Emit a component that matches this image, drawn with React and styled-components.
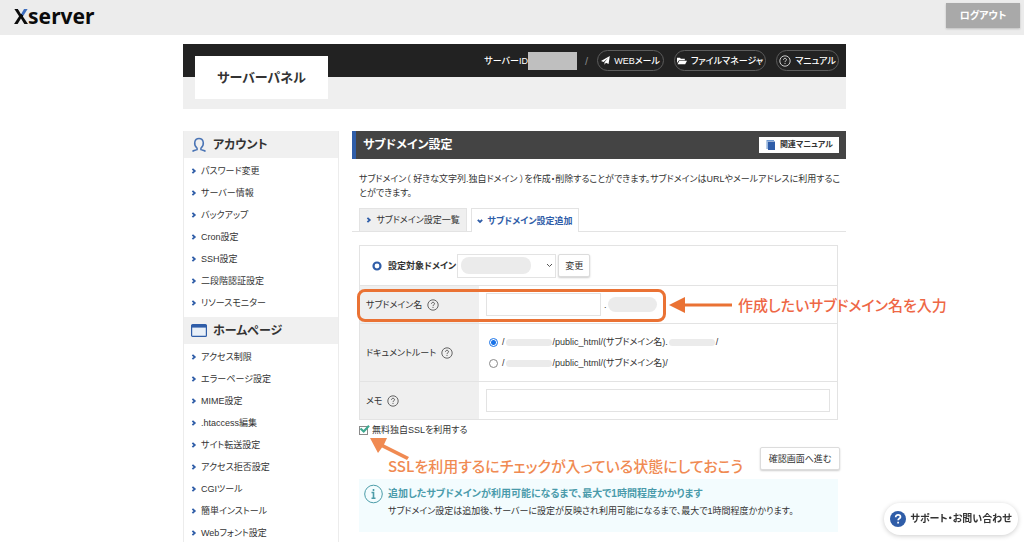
import React from "react";
import styled, { createGlobalStyle, css } from "styled-components";

const blue = "#2f5da8";
const orange = "#ea7234";
const line = "#e3e3e3";

const GlobalStyle = createGlobalStyle`
  *, *::before, *::after { box-sizing: border-box; }
  body {
    margin: 0;
    background: #fff;
    color: #333;
    font-family: "Liberation Sans", "Noto Sans CJK JP", sans-serif;
    font-size: 9px;
    line-height: 14px;
    font-feature-settings: "palt";
  }
  button, input, select { font: inherit; color: inherit; font-feature-settings: inherit; }
  a { color: inherit; text-decoration: none; }
  ul { list-style: none; margin: 0; padding: 0; }
  h1, h2, h3, p { margin: 0; }
  svg { display: block; flex: none; }
`;

const TopBar = styled.header`
  display: flex;
  justify-content: space-between;
  align-items: flex-start;
  height: 35px;
  padding: 3px 4px 0 14px;
  background: #ececec;
`;

const Logo = styled.a`
  font-family: "Noto Sans", sans-serif;
  font-size: 21px;
  line-height: 26px;
  font-weight: 700;
  color: #0b0b0b;
`;

const LogoX = styled.span`
  background: linear-gradient(48deg, #0b0b0b 57%, #3d6dbd 57%);
  background-clip: text;
  -webkit-background-clip: text;
  color: transparent;
`;

const LogoutButton = styled.button`
  width: 74px;
  height: 25px;
  border: 0;
  padding: 0;
  background: #a9a9a9;
  box-shadow: 0 1px 2px rgba(0, 0, 0, 0.2);
  color: #fff;
  font-size: 10px;
  font-weight: 700;
`;

const Page = styled.div`
  padding: 9px 0 0 5px;
`;

const Container = styled.div`
  max-width: 663px;
  margin: 0 auto;
`;

const PanelHeader = styled.div`
  display: flex;
  justify-content: space-between;
  align-items: flex-start;
  height: 65px;
  padding: 0 7px 0 12px;
  background: linear-gradient(#222 33px, #efefef 33px);
`;

const PanelTitle = styled.h1`
  margin-top: 12px;
  width: 133px;
  background: #fff;
  font-size: 13px;
  line-height: 43px;
  font-weight: 700;
  text-align: center;
`;

const HeaderNav = styled.nav`
  display: flex;
  align-items: center;
  height: 33px;
  color: #fff;
  font-weight: 500;
`;

const ServerIdMask = styled.span`
  width: 49px;
  height: 18px;
  background: #bfbfbf;
`;

const Divider = styled.span`
  margin: 0 9px 0 8px;
  color: #888;
  font-size: 11px;
`;

const PillLink = styled.a`
  display: flex;
  align-items: center;
  justify-content: center;
  gap: 4px;
  width: ${(p) => p.$width}px;
  height: 21px;
  border: 1px solid #5c5c5c;
  border-radius: 11px;
  & + & { margin-left: 10px; }
`;

const Columns = styled.div`
  display: grid;
  grid-template-columns: 156px minmax(0, 1fr);
  gap: 13px;
  margin-top: 22px;
`;

const Sidebar = styled.aside`
  border: 1px solid #ececec;
  border-width: 0 1px;
`;

const SideHeading = styled.h2`
  display: flex;
  align-items: center;
  gap: 6px;
  height: 27px;
  padding-left: 7px;
  background: #f0f0f0;
  font-size: 12px;
  font-weight: 700;
`;

const SideList = styled.ul`
  padding: 2px 0 3px 7px;
`;

const SideLink = styled.a`
  display: flex;
  align-items: center;
  gap: 4px;
  height: 22px;
`;

const TitleBar = styled.div`
  display: flex;
  justify-content: space-between;
  align-items: center;
  height: 28px;
  padding: 0 7px;
  border-left: 4px solid ${blue};
  background: #444;
`;

const PageTitle = styled.h2`
  color: #fff;
  font-size: 12px;
  font-weight: 700;
`;

const ManualLink = styled.a`
  display: flex;
  align-items: center;
  gap: 5px;
  height: 16px;
  padding: 0 6px 0 7px;
  background: #fff;
  font-size: 8px;
  font-weight: 700;
`;

const Description = styled.p`
  padding: 13px 0 8px 7px;
`;

const Tabs = styled.div`
  display: flex;
  gap: 4px;
  height: 24px;
  padding-left: 7px;
  border-bottom: 1px solid ${line};
`;

const Tab = styled.a`
  display: flex;
  align-items: center;
  justify-content: center;
  gap: 4px;
  width: 108px;
  height: 23px;
  border: 1px solid ${line};
  border-bottom: 0;
  background: #efefef;
  ${(p) =>
    p.$active &&
    css`
      height: 24px;
      background: #fff;
      color: ${blue};
      font-weight: 700;
    `}
`;

const Content = styled.div`
  padding: 13px 8px 0 7px;
`;

const FormTable = styled.div`
  border: 1px solid ${line};
`;

const Row = styled.div`
  position: relative;
  display: flex;
  height: ${(p) => p.$height}px;
  & + & { border-top: 1px solid ${line}; }
`;

const RowHead = styled.div`
  display: flex;
  align-items: center;
  gap: 5px;
  width: 119px;
  padding-left: 6px;
  background: #efefef;
`;

const RowBody = styled.div`
  display: flex;
  flex: 1;
  align-items: center;
  padding: 0 7px;
`;

const DomainRow = styled.div`
  display: flex;
  align-items: center;
  padding-left: 12px;
`;

const DomainLabel = styled.label`
  margin: 0 1px 0 6px;
  font-weight: 700;
`;

const SelectBox = styled.div`
  display: grid;
  align-items: center;
  margin-right: 2px;
  & > * { grid-area: 1 / 1; }
  & > svg { justify-self: end; margin-right: 3px; pointer-events: none; }
`;

const Select = styled.select`
  appearance: none;
  width: 99px;
  height: 24px;
  border: 1px solid ${line};
  border-radius: 0;
  background: #fff;
`;

const Mask = styled.span`
  display: inline-block;
  width: ${(p) => p.$width}px;
  height: ${(p) => p.$height}px;
  margin: 0 ${(p) => p.$gap || 0}px;
  border-radius: 8px;
  background: #ebebeb;
  pointer-events: none;
`;

const Button = styled.button`
  width: ${(p) => p.$width}px;
  height: 23px;
  padding: 0;
  border: 1px solid #dcdcdc;
  border-radius: 2px;
  background: #fff;
  box-shadow: 0 1px 2px rgba(0, 0, 0, 0.2);
`;

const TextInput = styled.input`
  width: ${(p) => p.$width};
  height: 23px;
  border: 1px solid ${line};
  background: #fff;
  padding: 0 4px;
`;

const Separator = styled.span`
  margin-left: 3px;
`;

const Radios = styled.div`
  display: flex;
  flex-direction: column;
  justify-content: center;
  gap: 6px;
  padding-left: 10px;
`;

const RadioLabel = styled.label`
  display: flex;
  align-items: center;
  height: 15px;
`;

const Radio = styled.input`
  appearance: none;
  width: 9px;
  height: 9px;
  margin: 0 4px 0 0;
  border: 1px solid #888;
  border-radius: 50%;
  background: #fff;
  &:checked {
    border-color: #1a73e8;
    background: radial-gradient(circle, #1a73e8 2px, #fff 3px);
  }
`;

const CheckLabel = styled.label`
  display: grid;
  grid-template-columns: 9px auto;
  column-gap: 4px;
  justify-content: start;
  align-items: center;
  height: 20px;
  & > input, & > svg { grid-area: 1 / 1; }
`;

const Checkbox = styled.input`
  appearance: none;
  width: 9px;
  height: 9px;
  margin: 0;
  border: 1px solid #8a8a8a;
  background: #fff;
`;

const SubmitArea = styled.div`
  position: relative;
  display: flex;
  justify-content: flex-end;
  height: 39px;
  padding-top: 7px;
  margin-right: -2px;
`;

const Highlight = styled.div`
  position: absolute;
  left: -3px;
  top: 3px;
  width: 309px;
  height: 33px;
  border: 3px solid ${orange};
  border-radius: 8px;
  pointer-events: none;
`;

const noteText = css`
  font-family: "Noto Sans CJK JP", sans-serif;
  font-size: ${(p) => p.$size || 15}px;
  line-height: 22px;
  font-weight: 500;
  white-space: nowrap;
`;

const FieldNote = styled.div`
  position: absolute;
  left: 309px;
  top: 8px;
  display: flex;
  align-items: center;
  gap: 6px;
  color: #ee6745;
  ${noteText}
`;

const CheckNote = styled.p`
  position: absolute;
  left: 29px;
  top: 15px;
  color: #f08a52;
  ${noteText}
`;

const CheckArrow = styled.svg`
  position: absolute;
  left: 11px;
  top: -3px;
`;

const InfoBox = styled.section`
  display: flex;
  align-items: flex-start;
  gap: 5px;
  height: 53px;
  padding: 5px;
  background: #f3fcfe;
`;

const InfoTitle = styled.h3`
  color: #4a9bab;
  font-size: 10px;
  line-height: 20px;
  font-weight: 700;
`;

const SupportButton = styled.button`
  position: fixed;
  right: 6px;
  bottom: 7px;
  display: flex;
  align-items: center;
  justify-content: center;
  gap: 4px;
  width: 134px;
  height: 32px;
  padding: 0;
  border: 0;
  border-radius: 16px;
  background: #fff;
  box-shadow: 0 1px 5px rgba(0, 0, 0, 0.2);
  font-size: 10px;
  font-weight: 700;
`;

const Chevron = ({ down }) => (
  <svg width="6" height="6" viewBox="0 0 6 6" fill="none" stroke={blue} strokeWidth="1.8">
    <path d={down ? "M.8 1.8 3 4 5.2 1.8" : "M1.4.8 3.8 3 1.4 5.2"} />
  </svg>
);

const Help = ({ color = "#555" }) => (
  <svg width="12" height="12" viewBox="0 0 12 12" fill="none" stroke={color}>
    <circle cx="6" cy="6" r="5.2" strokeWidth=".9" />
    <path d="M4.5 4.8c0-2 3-2 3 0 0 1-1.5 1.1-1.5 2.1M6 7.9v1" strokeWidth="1" />
  </svg>
);

const UserIcon = () => (
  <svg width="16" height="16" viewBox="0 0 16 16" fill="none" stroke="#4a74b5" strokeWidth="1.5">
    <path d="M1.500 14.500c1-1.300 3-1 4.600-1.800v-1.500C2.200 7.800 3.200 1.500 8 1.500s5.800 6.300 1.900 9.700v1.500c1.600.8 3.600.5 4.600 1.800" />
  </svg>
);

const WindowIcon = () => (
  <svg width="16" height="13" viewBox="0 0 16 13">
    <rect x=".6" y=".6" width="14.800" height="11.800" rx="1" fill="#e9f0f8" stroke={blue} strokeWidth="1.200" />
    <path d="M.6 1h14.800v2.600H.6z" fill={blue} />
  </svg>
);

const PlaneIcon = () => (
  <svg width="9" height="9" viewBox="0 0 9 9" fill="#fff">
    <path d="M8.800 0 7.600 8 4.900 6.800 3.500 8.700V6.300L7.200 2 2.600 5.900 0 4.900z" />
  </svg>
);

const FolderIcon = () => (
  <svg width="10" height="8" viewBox="0 0 10 8" fill="#fff">
    <path d="M0 6V.8h3l.8 1h4v1.400H2L0 6z" />
    <path d="M2.400 3.800H10L8.200 7.300H.5z" />
  </svg>
);

const BookIcon = () => (
  <svg width="9" height="10" viewBox="0 0 9 10">
    <path d="M.5 0H8v1H1.700v8H.5z" fill="#6f9ad2" />
    <path d="M2 1.500h7V10H2z" fill={blue} />
  </svg>
);

const menus = [
  {
    title: "アカウント",
    icon: <UserIcon />,
    items: ["パスワード変更", "サーバー情報", "バックアップ", "Cron設定", "SSH設定", "二段階認証設定", "リソースモニター"],
  },
  {
    title: "ホームページ",
    icon: <WindowIcon />,
    items: ["アクセス制限", "エラーページ設定", "MIME設定", ".htaccess編集", "サイト転送設定", "アクセス拒否設定", "CGIツール", "簡単インストール", "Webフォント設定"],
  },
];

export default function App() {
  return (
    <>
      <GlobalStyle />
      <TopBar>
        <Logo href="#"><LogoX>X</LogoX>server</Logo>
        <LogoutButton type="button">ログアウト</LogoutButton>
      </TopBar>
      <Page>
        <Container>
          <PanelHeader>
            <PanelTitle>サーバーパネル</PanelTitle>
            <HeaderNav>
              <span>サーバーID</span>
              <ServerIdMask />
              <Divider>/</Divider>
              <PillLink href="#" $width={67}><PlaneIcon />WEBメール</PillLink>
              <PillLink href="#" $width={92}><FolderIcon />ファイルマネージャ</PillLink>
              <PillLink href="#" $width={63}><Help color="#ddd" />マニュアル</PillLink>
            </HeaderNav>
          </PanelHeader>
          <Columns>
            <Sidebar>
              {menus.map((menu) => (
                <nav key={menu.title}>
                  <SideHeading>{menu.icon}{menu.title}</SideHeading>
                  <SideList>
                    {menu.items.map((item) => (
                      <li key={item}><SideLink href="#"><Chevron />{item}</SideLink></li>
                    ))}
                  </SideList>
                </nav>
              ))}
            </Sidebar>
            <main>
              <TitleBar>
                <PageTitle>サブドメイン設定</PageTitle>
                <ManualLink href="#"><BookIcon />関連マニュアル</ManualLink>
              </TitleBar>
              <Description>
                サブドメイン（ 好きな文字列.独自ドメイン ）を作成・削除することができます。サブドメインはURLやメールアドレスに利用することができます。
              </Description>
              <Tabs>
                <Tab href="#"><Chevron />サブドメイン設定一覧</Tab>
                <Tab href="#" $active><Chevron down />サブドメイン設定追加</Tab>
              </Tabs>
              <Content>
                <FormTable>
                  <Row $height={39}>
                    <DomainRow>
                      <svg width="10" height="10" viewBox="0 0 10 10">
                        <circle cx="5" cy="5" r="3.500" fill="none" stroke={blue} strokeWidth="2.200" />
                      </svg>
                      <DomainLabel htmlFor="domain">設定対象ドメイン</DomainLabel>
                      <SelectBox>
                        <Select id="domain" />
                        <Mask $width={70} $height={17} $gap={4} />
                        <svg width="7" height="5" viewBox="0 0 7 5" fill="none" stroke="#555">
                          <path d="m1 1 2.500 2.500L6 1" />
                        </svg>
                      </SelectBox>
                      <Button type="button" $width={32}>変更</Button>
                    </DomainRow>
                  </Row>
                  <Row $height={38}>
                    <RowHead><label htmlFor="subdomain">サブドメイン名</label><Help /></RowHead>
                    <RowBody>
                      <TextInput id="subdomain" type="text" $width="115px" />
                      <Separator>.</Separator>
                      <Mask $width={49} $height={15} $gap={1} />
                    </RowBody>
                    <Highlight />
                    <FieldNote $size={15}>
                      <svg width="63" height="16" viewBox="0 0 63 16" fill={orange}>
                        <path d="M0 8 16 0v6.500h47v3H16V16z" />
                      </svg>
                      作成したいサブドメイン名を入力
                    </FieldNote>
                  </Row>
                  <Row $height={58}>
                    <RowHead>ドキュメントルート<Help /></RowHead>
                    <Radios>
                      <RadioLabel>
                        <Radio type="radio" name="root" defaultChecked />
                        /<Mask $width={46} $height={7} $gap={1} />/public_html/(サブドメイン名).
                        <Mask $width={46} $height={7} $gap={1} />/
                      </RadioLabel>
                      <RadioLabel>
                        <Radio type="radio" name="root" />
                        /<Mask $width={46} $height={7} $gap={1} />/public_html/(サブドメイン名)/
                      </RadioLabel>
                    </Radios>
                  </Row>
                  <Row $height={38}>
                    <RowHead><label htmlFor="memo">メモ</label><Help /></RowHead>
                    <RowBody><TextInput id="memo" type="text" $width="100%" /></RowBody>
                  </Row>
                </FormTable>
                <CheckLabel>
                  <Checkbox type="checkbox" defaultChecked />
                  <svg width="11" height="10" viewBox="0 0 11 10" fill="none" stroke="#3fa890" strokeWidth="2.200">
                    <path d="m1.500 3.500 3.200 3L10 .8" />
                  </svg>
                  無料独自SSLを利用する
                </CheckLabel>
                <SubmitArea>
                  <CheckArrow width="39" height="23" viewBox="0 0 39 23" fill="#f08a52">
                    <path d="m0 1 17 0-3 6.500 25 12.500-2 3L12 10.500 8 16z" />
                  </CheckArrow>
                  <CheckNote>SSLを利用するにチェックが入っている状態にしておこう</CheckNote>
                  <Button type="submit" $width={80}>確認画面へ進む</Button>
                </SubmitArea>
                <InfoBox>
                  <svg width="19" height="20" viewBox="0 0 19 20" fill="none" stroke="#4b9ca8">
                    <circle cx="9.500" cy="10" r="8.800" strokeWidth="1" />
                    <path d="M7.500 8.500h2V14M7.500 14.200h4M9.500 5v2" strokeWidth="1.600" />
                  </svg>
                  <div>
                    <InfoTitle>追加したサブドメインが利用可能になるまで、最大で1時間程度かかります</InfoTitle>
                    <p>サブドメイン設定は追加後、サーバーに設定が反映され利用可能になるまで、最大で1時間程度かかります。</p>
                  </div>
                </InfoBox>
              </Content>
            </main>
          </Columns>
        </Container>
      </Page>
      <SupportButton type="button">
        <svg width="16" height="16" viewBox="0 0 16 16" fill="none">
          <circle cx="8" cy="8" r="8" fill={blue} />
          <path d="M5.700 6.200c0-3.300 4.800-3 4.800-.2 0 1.500-2.400 1.600-2.400 3.200M8.100 10.800v1.800" stroke="#fff" strokeWidth="1.700" />
        </svg>
        サポート・お問い合わせ
      </SupportButton>
    </>
  );
}
